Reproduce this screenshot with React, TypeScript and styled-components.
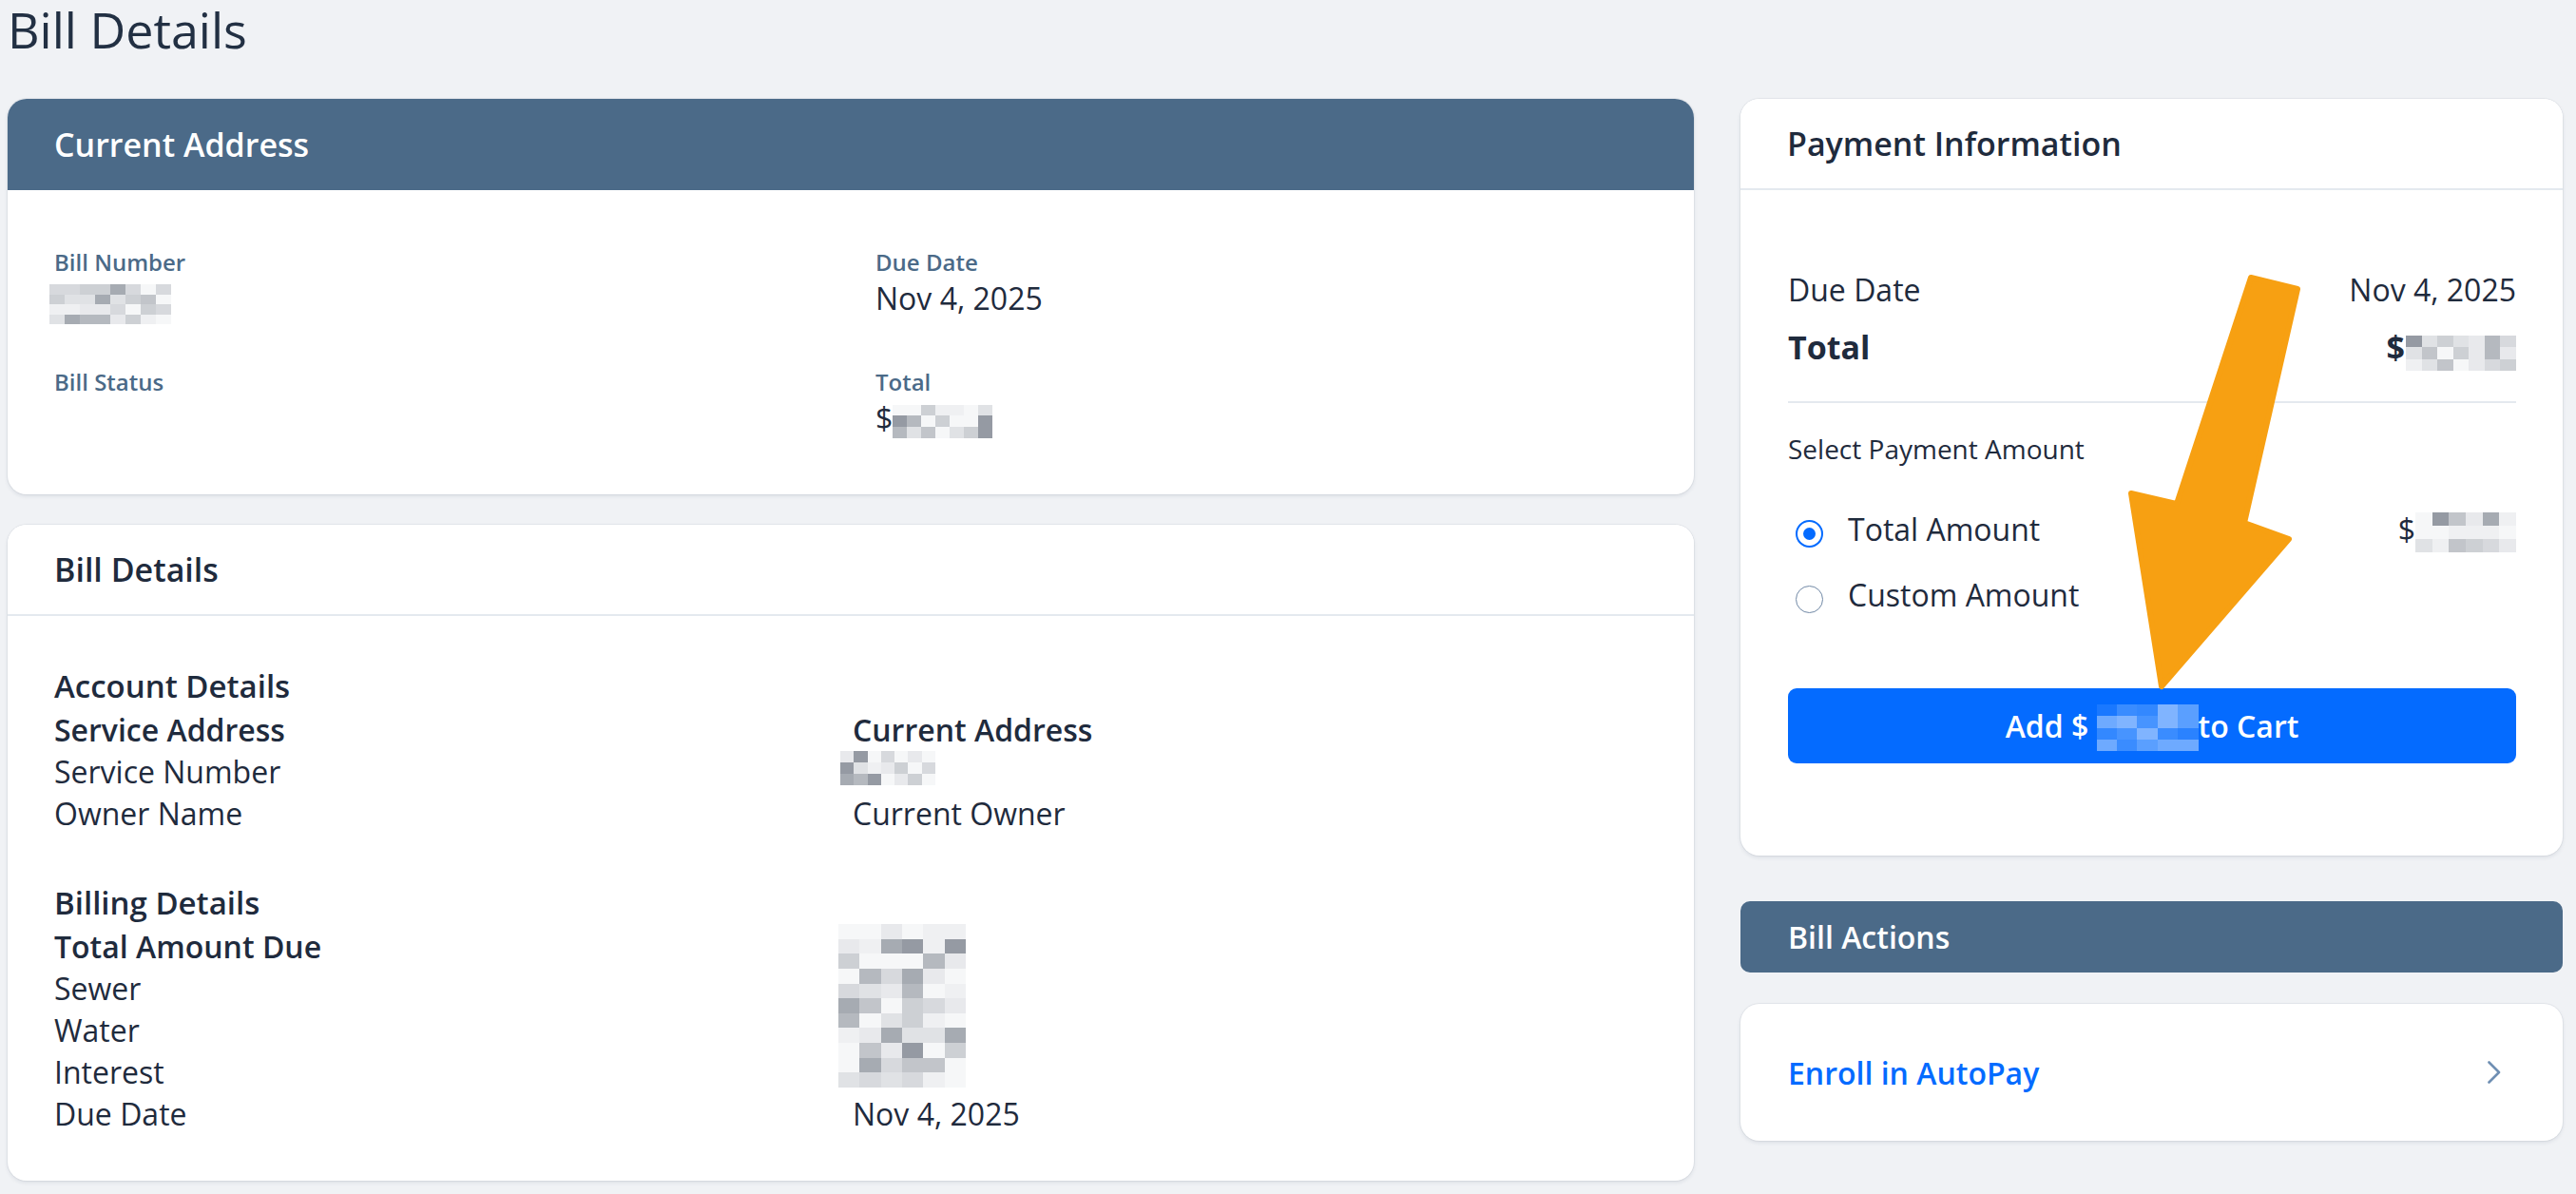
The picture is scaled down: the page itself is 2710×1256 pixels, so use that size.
import React from 'react';
import styled, { createGlobalStyle } from 'styled-components';

const GlobalStyle = createGlobalStyle`
  * { box-sizing: border-box; }
  html, body { margin: 0; padding: 0; background: #f0f2f5; }
  body {
    font-family: "Open Sans", "Noto Sans", sans-serif;
    color: #1f2b3d;
    -webkit-font-smoothing: antialiased;
  }
`;

const SLATE = '#4b6a88';
const INK = '#1f2b3d';
const BLUE = '#046bff';
const RULE = '#e4e9ef';

/* ---------- page frame ---------- */

const Page = styled.div`
  position: relative;
  min-height: 1256px;
  padding: 0 14px 0 8px;
`;

const PageTitle = styled.h1`
  margin: 0 0 42px;
  font-size: 52px;
  line-height: 62px;
  font-weight: 400;
  color: #223043;
`;

const Columns = styled.div`
  display: grid;
  grid-template-columns: 1774px 865px;
  column-gap: 49px;
  align-items: start;
`;

const Stack = styled.div<{ $gap: number }>`
  display: flex;
  flex-direction: column;
  gap: ${(p) => p.$gap}px;
`;

/* ---------- cards ---------- */

const Card = styled.section`
  background: #fff;
  border-radius: 20px;
  box-shadow: 0 0 0 1px rgba(30, 50, 80, 0.05), 0 2px 4px rgba(30, 50, 80, 0.1);
  overflow: hidden;
`;

const CardHeader = styled.header<{ $tone: 'slate' | 'plain' }>`
  height: 96px;
  display: flex;
  align-items: center;
  padding: 0 49px;
  background: ${(p) => (p.$tone === 'slate' ? SLATE : '#fff')};
  border-bottom: ${(p) => (p.$tone === 'slate' ? 'none' : `2px solid ${RULE}`)};
`;

const CardTitle = styled.h2<{ $light?: boolean }>`
  margin: 0;
  font-size: 34px;
  line-height: 46px;
  font-weight: 600;
  color: ${(p) => (p.$light ? '#fff' : INK)};
`;

/* ---------- summary card ---------- */

const SummaryGrid = styled.div`
  display: grid;
  grid-template-columns: 1fr 1fr;
  column-gap: 52px;
  row-gap: 52px;
  padding: 60px 49px;
`;

const Field = styled.div`
  display: flex;
  flex-direction: column;
  gap: 2px;
`;

const FieldLabel = styled.div`
  font-size: 24px;
  line-height: 32px;
  font-weight: 600;
  color: ${SLATE};
`;

const FieldValue = styled.div`
  height: 40px;
  display: flex;
  align-items: center;
  font-size: 32px;
  line-height: 40px;
  color: ${INK};
`;

/* ---------- detail card ---------- */

const DetailBody = styled.div`
  display: flex;
  flex-direction: column;
  gap: 48px;
  padding: 50px 49px 48px;
`;

const SectionHeading = styled.h3`
  margin: 0;
  font-size: 33px;
  line-height: 48px;
  font-weight: 600;
  color: ${INK};
`;

const DetailGrid = styled.div`
  display: grid;
  grid-template-columns: 840px 1fr;
  grid-auto-rows: 44px;
  font-size: 32px;
  line-height: 44px;
  color: ${INK};
`;

const DetailCell = styled.div<{ $strong?: boolean; $span?: number }>`
  display: flex;
  align-items: flex-start;
  font-weight: ${(p) => (p.$strong ? 600 : 400)};
  white-space: nowrap;
  ${(p) => (p.$span ? `grid-row: span ${p.$span};` : '')}
`;

/* ---------- payment card ---------- */

const PaymentBody = styled.div`
  display: flex;
  flex-direction: column;
  padding: 83px 49px 97px 50px;
`;

const AmountRow = styled.div<{ $emphasis?: boolean }>`
  display: flex;
  justify-content: space-between;
  align-items: flex-start;
  height: 44px;
  margin-top: ${(p) => (p.$emphasis ? 16 : 0)}px;
  font-size: ${(p) => (p.$emphasis ? 34 : 32)}px;
  font-weight: ${(p) => (p.$emphasis ? 700 : 400)};
  line-height: 44px;
  color: ${INK};
`;

const Amount = styled.span`
  display: flex;
  align-items: flex-start;
`;

const Divider = styled.hr`
  margin: 35px 0 28px;
  border: 0;
  height: 2px;
  background: ${RULE};
`;

const PickerLabel = styled.div`
  font-size: 28px;
  line-height: 40px;
  color: ${INK};
`;

const RadioList = styled.div`
  display: flex;
  flex-direction: column;
  gap: 25px;
  margin-top: 43px;
`;

const RadioRow = styled.label`
  display: flex;
  align-items: flex-start;
  height: 44px;
  font-size: 32px;
  line-height: 44px;
  color: ${INK};
`;

const RadioMark = styled.span<{ $checked?: boolean }>`
  flex: none;
  width: 29px;
  height: 29px;
  margin: 12px 26px 0 8px;
  border-radius: 50%;
  border: ${(p) => (p.$checked ? `2px solid ${BLUE}` : '1.5px solid #7088a5')};
  display: grid;
  place-items: center;

  &::after {
    content: '';
    display: ${(p) => (p.$checked ? 'block' : 'none')};
    width: 13px;
    height: 13px;
    border-radius: 50%;
    background: ${BLUE};
  }
`;

const RadioValue = styled.span`
  margin-left: auto;
  display: flex;
  align-items: flex-start;
`;

const CartButton = styled.button`
  margin-top: 76px;
  height: 79px;
  width: 100%;
  border: 0;
  border-radius: 9px;
  background: ${BLUE};
  color: #fff;
  font-family: inherit;
  font-size: 32px;
  font-weight: 600;
  display: flex;
  align-items: center;
  justify-content: center;
  cursor: pointer;
  white-space: pre;
`;

/* ---------- actions ---------- */

const ActionsBar = styled.div`
  height: 75px;
  display: flex;
  align-items: center;
  padding: 0 50px;
  border-radius: 10px;
  background: ${SLATE};
  color: #fff;
  font-size: 32px;
  font-weight: 600;
`;

const ActionCard = styled(Card)`
  height: 144px;
  display: flex;
  align-items: center;
  justify-content: space-between;
  padding: 0 64px 0 50px;
`;

const ActionLink = styled.a`
  font-size: 32px;
  font-weight: 600;
  color: ${BLUE};
  text-decoration: none;
`;

/* ---------- redacted amounts, drawn as a pixel mosaic ---------- */

const MosaicGrid = styled.span<{ $w: number; $h: number; $cols: number; $rows: number; $mt: number; $ml: number }>`
  flex: none;
  display: grid;
  width: ${(p) => p.$w}px;
  height: ${(p) => p.$h}px;
  margin-top: ${(p) => p.$mt}px;
  margin-left: ${(p) => p.$ml}px;
  grid-template-columns: repeat(${(p) => p.$cols}, 1fr);
  grid-template-rows: repeat(${(p) => p.$rows}, 1fr);
`;

const GREYS = ['#f6f7f8', '#eff0f2', '#e8e9ec', '#e0e2e5', '#d7d9dd', '#cdd0d4', '#c2c5ca', '#b5b9bf', '#a6abb2', '#959aa3'];
const BLUES = ['#3a8cff', '#4794ff', '#5a9fff', '#80b4ff', '#2a82ff', '#1a78ff', '#6eaaff', '#3388ff'];

function seeded(seed: number) {
  let s = seed >>> 0;
  return () => {
    s = (s + 0x6d2b79f5) >>> 0;
    let t = s;
    t = Math.imul(t ^ (t >>> 15), t | 1);
    t ^= t + Math.imul(t ^ (t >>> 7), t | 61);
    return ((t ^ (t >>> 14)) >>> 0) / 4294967296;
  };
}

type MosaicProps = {
  w: number;
  h: number;
  cols: number;
  rows: number;
  seed: number;
  tone?: 'grey' | 'blue';
  weight?: number;
  mt?: number;
  ml?: number;
};

/* weight > 1 pushes the cells towards the lighter shades */
function Mosaic({ w, h, cols, rows, seed, tone = 'grey', weight = 1.6, mt = 0, ml = 0 }: MosaicProps) {
  const rand = seeded(seed);
  const palette = tone === 'blue' ? BLUES : GREYS;
  const cells = Array.from({ length: cols * rows }, () => {
    const r = Math.pow(rand(), weight);
    const idx = Math.min(palette.length - 1, Math.floor(r * palette.length));
    return palette[idx];
  });
  return (
    <MosaicGrid $w={w} $h={h} $cols={cols} $rows={rows} $mt={mt} $ml={ml} aria-hidden>
      {cells.map((c, i) => (
        <span key={i} style={{ background: c }} />
      ))}
    </MosaicGrid>
  );
}

/* ---------- annotation arrow ---------- */

const Overlay = styled.svg`
  position: absolute;
  left: 2230px;
  top: 280px;
  pointer-events: none;
`;

function PointerArrow() {
  return (
    <Overlay width="200" height="460" viewBox="0 0 200 460">
      <polygon
        points="138,12 187,24 131,270 178,287 44,442 12,239 60,250"
        fill="#f7a012"
        stroke="#f7a012"
        strokeWidth="6"
        strokeLinejoin="round"
      />
    </Overlay>
  );
}

function Chevron() {
  return (
    <svg width="16" height="24" viewBox="0 0 16 24" fill="none">
      <path d="M2.5 1.5 L13 12 L2.5 22.5" stroke="#6f8fb3" strokeWidth="2.6" strokeLinecap="round" strokeLinejoin="round" />
    </svg>
  );
}

export default function App() {
  return (
    <>
      <GlobalStyle />
      <Page>
        <PageTitle>Bill Details</PageTitle>
        <Columns>
          <Stack $gap={32}>
            <Card>
              <CardHeader $tone="slate">
                <CardTitle $light>Current Address</CardTitle>
              </CardHeader>
              <SummaryGrid>
                <Field>
                  <FieldLabel>Bill Number</FieldLabel>
                  <FieldValue>
                    <Mosaic w={128} h={42} cols={8} rows={4} seed={11} weight={1.3} mt={12} ml={-5} />
                  </FieldValue>
                </Field>
                <Field>
                  <FieldLabel>Due Date</FieldLabel>
                  <FieldValue>Nov 4, 2025</FieldValue>
                </Field>
                <Field>
                  <FieldLabel>Bill Status</FieldLabel>
                  <FieldValue />
                </Field>
                <Field>
                  <FieldLabel>Total</FieldLabel>
                  <FieldValue>
                    $<Mosaic w={105} h={35} cols={7} rows={3} seed={23} weight={1.5} mt={6} />
                  </FieldValue>
                </Field>
              </SummaryGrid>
            </Card>

            <Card>
              <CardHeader $tone="plain">
                <CardTitle>Bill Details</CardTitle>
              </CardHeader>
              <DetailBody>
                <div>
                  <SectionHeading>Account Details</SectionHeading>
                  <DetailGrid>
                    <DetailCell $strong>Service Address</DetailCell>
                    <DetailCell $strong>Current Address</DetailCell>
                    <DetailCell>Service Number</DetailCell>
                    <DetailCell>
                      <Mosaic w={100} h={36} cols={7} rows={3} seed={37} weight={2.4} ml={-13} />
                    </DetailCell>
                    <DetailCell>Owner Name</DetailCell>
                    <DetailCell>Current Owner</DetailCell>
                  </DetailGrid>
                </div>
                <div>
                  <SectionHeading>Billing Details</SectionHeading>
                  <DetailGrid>
                    <DetailCell $strong>Total Amount Due</DetailCell>
                    <DetailCell $span={4}>
                      <Mosaic w={134} h={172} cols={6} rows={11} seed={51} weight={1.6} mt={-2} ml={-15} />
                    </DetailCell>
                    <DetailCell>Sewer</DetailCell>
                    <DetailCell>Water</DetailCell>
                    <DetailCell>Interest</DetailCell>
                    <DetailCell>Due Date</DetailCell>
                    <DetailCell>Nov 4, 2025</DetailCell>
                  </DetailGrid>
                </div>
              </DetailBody>
            </Card>
          </Stack>

          <Stack $gap={48}>
            <Card>
              <CardHeader $tone="plain">
                <CardTitle>Payment Information</CardTitle>
              </CardHeader>
              <PaymentBody>
                <AmountRow>
                  <span>Due Date</span>
                  <span>Nov 4, 2025</span>
                </AmountRow>
                <AmountRow $emphasis>
                  <span>Total</span>
                  <Amount>
                    $<Mosaic w={116} h={37} cols={7} rows={3} seed={67} weight={1.2} mt={10} ml={1} />
                  </Amount>
                </AmountRow>
                <Divider />
                <PickerLabel>Select Payment Amount</PickerLabel>
                <RadioList>
                  <RadioRow>
                    <RadioMark $checked />
                    Total Amount
                    <RadioValue>
                      $<Mosaic w={106} h={42} cols={6} rows={3} seed={79} weight={1.6} mt={4} />
                    </RadioValue>
                  </RadioRow>
                  <RadioRow>
                    <RadioMark />
                    Custom Amount
                  </RadioRow>
                </RadioList>
                <CartButton type="button">
                  {'Add $ '}
                  <Mosaic w={107} h={49} cols={5} rows={4} seed={91} tone="blue" weight={1} mt={4} />
                  {'to Cart'}
                </CartButton>
              </PaymentBody>
            </Card>

            <Stack $gap={33}>
              <ActionsBar>Bill Actions</ActionsBar>
              <ActionCard>
                <ActionLink href="#">Enroll in AutoPay</ActionLink>
                <Chevron />
              </ActionCard>
            </Stack>
          </Stack>
        </Columns>
        <PointerArrow />
      </Page>
    </>
  );
}
